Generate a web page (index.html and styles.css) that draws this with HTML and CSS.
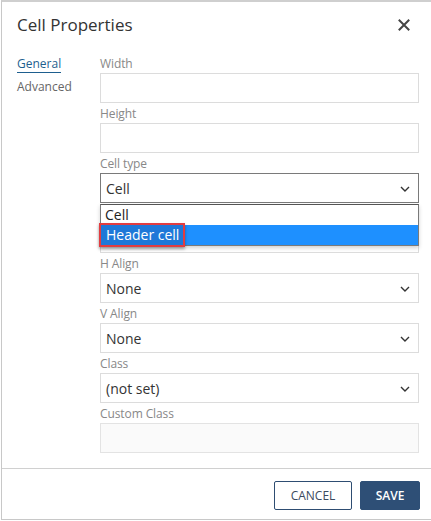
FILE: index.html
```html
<!DOCTYPE html>
<html>
<head>
<meta charset="utf-8">
<link rel="stylesheet" href="styles.css">
</head>
<body>
<div class="dialog">
  <div class="header">
    <div class="title">Cell Properties</div>
    <svg class="close" width="12" height="12" viewBox="0 0 12 12"><path d="M1.5 1.5 L10.5 10.5 M10.5 1.5 L1.5 10.5" stroke="#444" stroke-width="2" stroke-linecap="square"/></svg>
  </div>
  <div class="body">
    <nav class="nav">
      <a class="tab active">General</a>
      <a class="tab">Advanced</a>
    </nav>
    <div class="form">
      <div class="field">
        <label class="label">Width</label>
        <div class="input"></div>
      </div>
      <div class="field">
        <label class="label">Height</label>
        <div class="input"></div>
      </div>
      <div class="field field-open">
        <label class="label">Cell type</label>
        <div class="input select focus"><span>Cell</span><svg class="chev" width="10" height="6" viewBox="0 0 10 6"><path d="M1 1 L5 5 L9 1" fill="none" stroke="#333" stroke-width="1.4"/></svg></div>
        <div class="dropdown">
          <div class="option">Cell</div>
          <div class="option selected"><span class="mark">Header cell</span></div>
        </div>
      </div>
      <div class="field">
        <div class="label"></div>
        <div class="input"></div>
      </div>
      <div class="field">
        <label class="label">H Align</label>
        <div class="input select"><span>None</span><svg class="chev" width="10" height="6" viewBox="0 0 10 6"><path d="M1 1 L5 5 L9 1" fill="none" stroke="#333" stroke-width="1.4"/></svg></div>
      </div>
      <div class="field">
        <label class="label">V Align</label>
        <div class="input select"><span>None</span><svg class="chev" width="10" height="6" viewBox="0 0 10 6"><path d="M1 1 L5 5 L9 1" fill="none" stroke="#333" stroke-width="1.4"/></svg></div>
      </div>
      <div class="field">
        <label class="label">Class</label>
        <div class="input select"><span>(not set)</span><svg class="chev" width="10" height="6" viewBox="0 0 10 6"><path d="M1 1 L5 5 L9 1" fill="none" stroke="#333" stroke-width="1.4"/></svg></div>
      </div>
      <div class="field">
        <label class="label">Custom Class</label>
        <div class="input disabled"></div>
      </div>
    </div>
  </div>
  <div class="footer">
    <button class="btn btn-cancel">CANCEL</button>
    <button class="btn btn-save">SAVE</button>
  </div>
</div>
</body>
</html>
```
FILE: styles.css
```css
html, body {
  margin: 0;
  padding: 0;
  background: #fff;
}
body {
  font-family: "Open Sans", "Noto Sans", sans-serif;
  color: #333;
  width: 431px;
  height: 521px;
  overflow: hidden;
}
.dialog {
  box-sizing: border-box;
  width: 440px;
  height: 520px;
  margin-left: 1px;
  border-top: 2px solid #cfcfcf;
  border-left: 1px solid #c8c8c8;
  border-bottom: 1px solid #c8c8c8;
  display: flex;
  flex-direction: column;
}
.header {
  display: flex;
  align-items: center;
  justify-content: space-between;
  height: 43px;
  padding: 0 0 0 15px;
  width: 393px;
}
.title {
  font-size: 17px;
  color: #333;
  margin-top: 1px;
}
.close {
  margin-top: 3px;
}
.body {
  display: flex;
  padding-left: 15px;
  flex: 1;
}
.nav {
  width: 83px;
  display: flex;
  flex-direction: column;
  padding-top: 11px;
}
.tab {
  font-size: 12px;
  color: #666;
  line-height: 16px;
  margin-bottom: 7px;
  align-self: flex-start;
}
.tab.active {
  color: #1e5f8f;
  border-bottom: 1px solid #1e5f8f;
  padding-bottom: 0px;
  margin-bottom: 6px;
}
.form {
  width: 319px;
  display: flex;
  flex-direction: column;
  padding-top: 9px;
}
.field {
  display: flex;
  flex-direction: column;
  height: 50px;
}
.field-open {
  position: relative;
}
.label {
  font-size: 12px;
  color: #888;
  line-height: 16px;
  height: 16px;
  padding-top: 2px;
  margin-bottom: 1px;
  letter-spacing: -0.1px;
}
.input {
  box-sizing: border-box;
  height: 30px;
  border: 1px solid #dcdcdc;
  background: #fff;
}
.input.disabled {
  background: #fafafa;
  border-color: #e3e3e3;
}
.select {
  display: flex;
  align-items: center;
  justify-content: space-between;
  padding: 0 8px 0 5px;
  font-size: 14px;
  color: #333;
}
.select.focus {
  border-color: #7a7a7a;
}
.chev {
  margin-top: 1px;
}
.dropdown {
  position: absolute;
  left: 0;
  top: 50px;
  width: 319px;
  box-sizing: border-box;
  border: 1px solid #7a7a7a;
  border-top-color: #555;
  background: #fff;
  box-shadow: 0 2px 4px rgba(0,0,0,0.18);
  z-index: 5;
}
.option {
  height: 20px;
  line-height: 20px;
  font-size: 14px;
  padding-left: 4px;
  color: #222;
}
.option.selected {
  background: #1e90ff;
  color: #fff;
  position: relative;
}
.mark {
  position: absolute;
  left: -2px;
  top: -2px;
  height: 20px;
  line-height: 20px;
  padding: 0 4px 0 5px;
  border: 2px solid #e23c40;
  box-shadow: 0 2px 3px rgba(0,0,0,0.35);
  background: #1e78d8;
}
.footer {
  border-top: 1px solid #d0d0d0;
  height: 51px;
  box-sizing: border-box;
  display: flex;
  align-items: center;
  gap: 8px;
  padding-left: 272px;
  padding-top: 2px;
}
.btn {
  box-sizing: border-box;
  height: 29px;
  font-family: "Open Sans", "Noto Sans", sans-serif;
  font-size: 12px;
  border-radius: 2px;
  cursor: pointer;
}
.btn-cancel {
  width: 78px;
  border: 1px solid #2e4d72;
  background: #fff;
  color: #3a4a5e;
}
.btn-save {
  width: 60px;
  border: 1px solid #2e4f76;
  background: #2e4f76;
  color: #fff;
  font-weight: 600;
}
```
